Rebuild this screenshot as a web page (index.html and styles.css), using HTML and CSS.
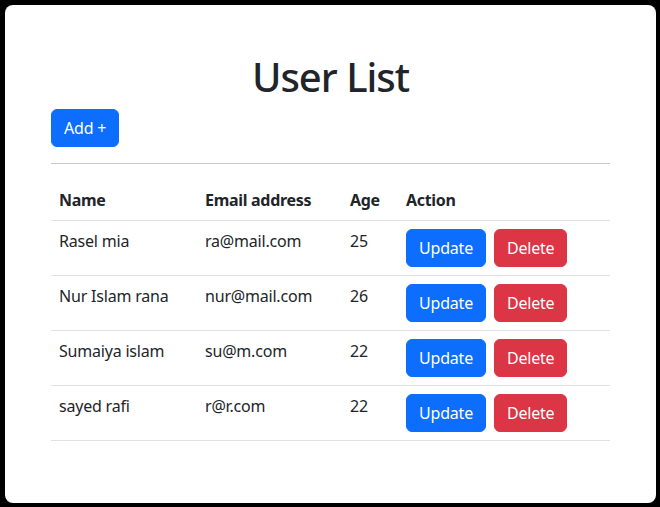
FILE: index.html
```html
<!DOCTYPE html>
<html lang="en">
<head>
<meta charset="utf-8">
<title>User List</title>
<link rel="stylesheet" href="styles.css">
</head>
<body>
<div class="card">
  <h1 class="title">User List</h1>
  <button class="btn btn-primary">Add +</button>
  <hr class="divider">
  <table class="table">
    <thead>
      <tr>
        <th class="col-name">Name</th>
        <th class="col-email">Email address</th>
        <th class="col-age">Age</th>
        <th>Action</th>
      </tr>
    </thead>
    <tbody>
      <tr>
        <td>Rasel mia</td>
        <td>ra@mail.com</td>
        <td>25</td>
        <td><div class="actions"><button class="btn btn-primary">Update</button><button class="btn btn-danger">Delete</button></div></td>
      </tr>
      <tr>
        <td>Nur Islam rana</td>
        <td>nur@mail.com</td>
        <td>26</td>
        <td><div class="actions"><button class="btn btn-primary">Update</button><button class="btn btn-danger">Delete</button></div></td>
      </tr>
      <tr>
        <td>Sumaiya islam</td>
        <td>su@m.com</td>
        <td>22</td>
        <td><div class="actions"><button class="btn btn-primary">Update</button><button class="btn btn-danger">Delete</button></div></td>
      </tr>
      <tr>
        <td>sayed rafi</td>
        <td>r@r.com</td>
        <td>22</td>
        <td><div class="actions"><button class="btn btn-primary">Update</button><button class="btn btn-danger">Delete</button></div></td>
      </tr>
    </tbody>
  </table>
</div>
</body>
</html>
```
FILE: styles.css
```css
* { box-sizing: border-box; }
html, body { height: 100%; }
body {
  margin: 0;
  background: #000;
  padding: 5px 4px 4px 5px;
  font-family: "Noto Sans", "Open Sans", sans-serif;
  font-size: 16px;
  line-height: 1.5;
  color: #212529;
}
.card {
  background: #fff;
  border-radius: 8px;
  height: 498px;
  padding: 48px 46px 0 46px;
}
.title {
  margin: 0 0 8px 0;
  text-align: center;
  font-size: 40px;
  font-weight: 500;
  line-height: 1.2;
  letter-spacing: -1px;
}
.btn {
  display: inline-block;
  font-family: inherit;
  font-size: 16px;
  line-height: 1.5;
  padding: 6px 12px;
  border: 1px solid transparent;
  border-radius: 6px;
  color: #fff;
  cursor: pointer;
  letter-spacing: -0.2px;
}
.btn-primary { background: #0d6efd; border-color: #0d6efd; }
.btn-danger { background: #dc3545; border-color: #dc3545; }
.divider {
  margin: 16px 0;
  border: 0;
  border-top: 1px solid #212529;
  opacity: 0.25;
}
.table {
  width: 100%;
  border-collapse: collapse;
}
.table th, .table td {
  padding: 8px;
  text-align: left;
  vertical-align: top;
  border-bottom: 1px solid #dee2e6;
}
.table td { letter-spacing: -0.2px; }
.table thead th { vertical-align: bottom; font-weight: 700; letter-spacing: -0.3px; }
.col-name { width: 146px; }
.col-email { width: 145px; }
.col-age { width: 56px; }
.actions { display: flex; gap: 8px; }
```
